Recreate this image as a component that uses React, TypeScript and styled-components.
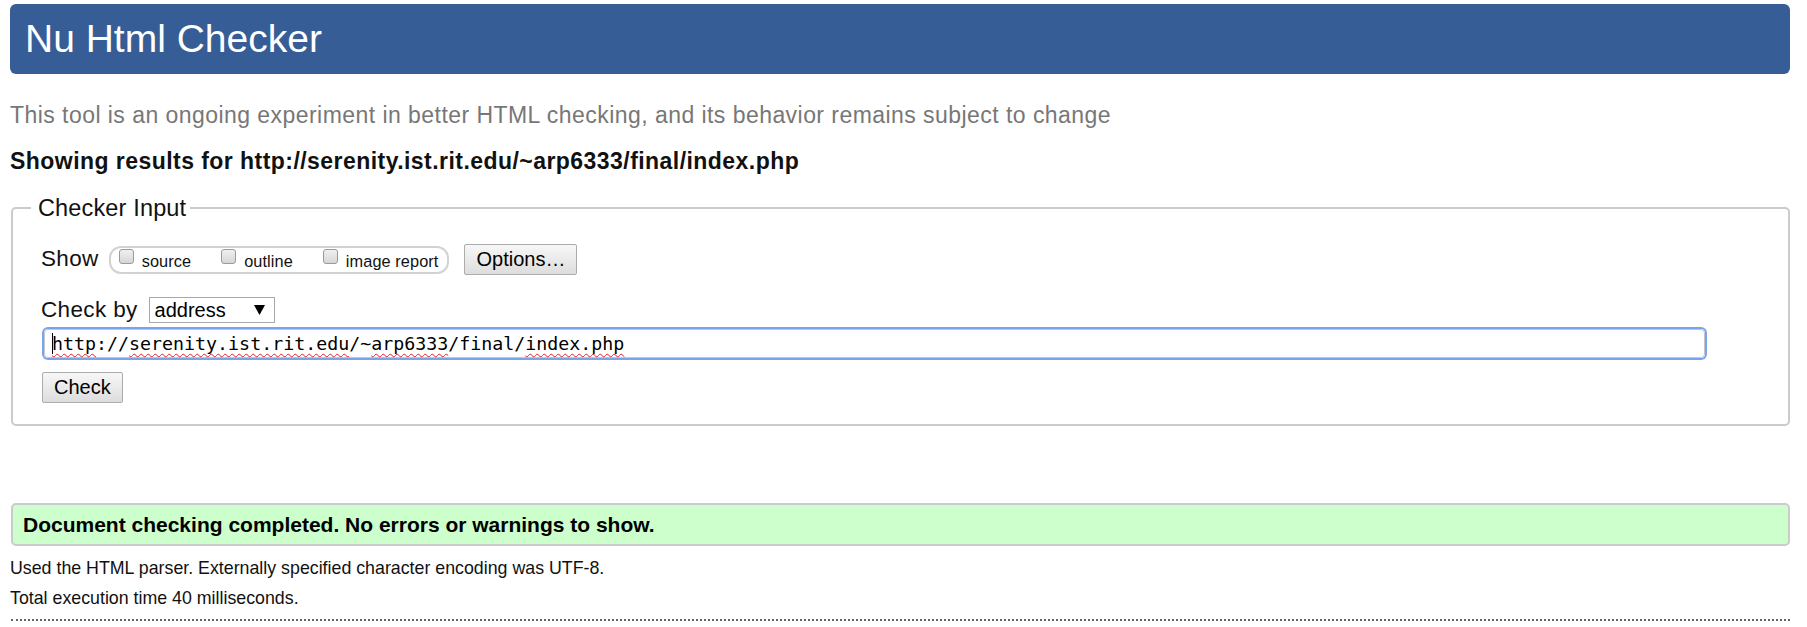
import React from "react";
import styled, { createGlobalStyle } from "styled-components";

const Global = createGlobalStyle`
  html, body { margin: 0; padding: 0; background: #fff; }
  body { font-family: "Liberation Sans", Arial, sans-serif; color: #111; }
`;

const Page = styled.div`
  padding: 4px 17px 0 10px;
`;

const Header = styled.header`
  height: 70px;
  background: #365d95;
  border-radius: 6px;
  display: flex;
  align-items: center;
  padding-left: 15px;
`;

const Title = styled.h1`
  margin: 0;
  font-size: 39px;
  font-weight: normal;
  color: #fff;
  line-height: 44px;
`;

const About = styled.p`
  margin: 28px 0 0 0;
  font-size: 23px;
  letter-spacing: 0.45px;
  line-height: 27px;
  color: #777;
`;

const Results = styled.h2`
  margin: 19px 0 0 0;
  font-size: 23px;
  letter-spacing: 0.45px;
  line-height: 27px;
  font-weight: bold;
  color: #111;
`;

const Fieldset = styled.fieldset`
  margin: 20px 0 0 1px;
  border: 2px solid #cbcbcb;
  border-radius: 5px;
  padding: 23px 0 21px 29px;
  min-width: 0;
`;

const Legend = styled.legend`
  margin-left: -11px;
  padding: 0 4px 0 7px;
  font-size: 23.5px;
  letter-spacing: 0.15px;
  line-height: 26px;
  color: #111;
`;

const Row = styled.div<{ $top?: number }>`
  display: flex;
  align-items: center;
  margin-top: ${(p) => p.$top ?? 0}px;
`;

const Label = styled.span<{ $lh: number }>`
  font-size: 22.5px;
  letter-spacing: 0.35px;
  line-height: ${(p) => p.$lh}px;
  align-self: flex-start;
  color: #111;
  margin-left: -1px;
`;

const Pill = styled.div`
  display: flex;
  align-items: flex-start;
  height: 24px;
  margin-left: 10px;
  padding: 0 9px 0 8px;
  border: 2px solid #d2d2d2;
  border-radius: 12px;
  gap: 30px;
`;

const CheckItem = styled.label`
  display: flex;
  align-items: flex-start;
  gap: 8px;
`;

const Box = styled.span`
  width: 15px;
  height: 15px;
  box-sizing: border-box;
  margin-top: 1px;
  border: 1px solid #9a9a9a;
  border-radius: 3px;
  background: linear-gradient(#f0f0f0, #d6d6d6);
`;

const CheckText = styled.span`
  font-size: 16.3px;
  letter-spacing: 0.1px;
  line-height: 24px;
  margin-top: 1px;
  color: #111;
`;

const Button = styled.button`
  height: 31px;
  padding: 0 11px;
  font-family: "Liberation Sans", Arial, sans-serif;
  font-size: 20px;
  color: #000;
  background: linear-gradient(#f7f7f7, #dddddd);
  border: 1px solid #acacac;
  border-radius: 2px;
  box-sizing: border-box;
`;

const OptionsButton = styled(Button)`
  margin-left: 15px;
  align-self: flex-start;
  padding: 0 11px;
`;

const Select = styled.div`
  margin-left: 11px;
  width: 126px;
  height: 26px;
  box-sizing: border-box;
  border: 1px solid #a9a9a9;
  background: #fff;
  display: flex;
  align-items: center;
  justify-content: space-between;
  padding: 0 9px 0 5px;
  font-size: 20px;
  line-height: 24px;
  color: #000;
`;

const Url = styled.div`
  margin-top: 6px;
  width: 1661px;
  height: 29px;
  box-sizing: border-box;
  border: 1px solid #c6c6c6;
  border-radius: 4px;
  box-shadow: 0 0 0 2px #78a4ee;
  margin-left: 2px;
  padding: 0 7px;
  display: flex;
  align-items: center;
  font-family: "DejaVu Sans Mono", "Liberation Mono", monospace;
  font-size: 18.3px;
  line-height: 27px;
  color: #000;
  white-space: pre;
`;

const Caret = styled.span`
  display: inline-block;
  width: 0;
  height: 21px;
  border-left: 1px solid #000;
  margin-right: -1px;
`;

const Misspelled = styled.span`
  text-decoration: underline wavy #e02020;
  text-decoration-thickness: 1px;
  text-underline-offset: 3px;
  text-decoration-skip-ink: none;
`;

const CheckButton = styled(Button)`
  display: block;
  margin-top: 14px;
`;

const Success = styled.div`
  margin: 77px 0 0 1px;
  height: 43px;
  box-sizing: border-box;
  border: 2px solid #cbcbcb;
  border-radius: 5px;
  background: #ccffcc;
  padding-left: 10px;
  font-size: 21px;
  font-weight: bold;
  line-height: 39px;
  color: #000;
`;

const Details = styled.div`
  margin-top: 7px;
  font-size: 17.8px;
  line-height: 30px;
  color: #111;
`;

const Rule = styled.hr`
  margin: 6px 0 0 1px;
  border: 0;
  border-top: 2px dotted #666;
  height: 0;
`;

function Arrow() {
  return (
    <svg width="11" height="10" viewBox="0 0 11 10" aria-hidden="true">
      <polygon points="0,0 11,0 5.5,10" fill="#000" />
    </svg>
  );
}

export default function App() {
  return (
    <>
      <Global />
      <Page>
        <Header>
          <Title>Nu Html Checker</Title>
        </Header>
        <About>
          This tool is an ongoing experiment in better HTML checking, and its behavior remains subject to change
        </About>
        <Results>Showing results for http://serenity.ist.rit.edu/~arp6333/final/index.php</Results>
        <Fieldset>
          <Legend>Checker Input</Legend>
          <Row>
            <Label $lh={29}>Show</Label>
            <Pill>
              <CheckItem>
                <Box />
                <CheckText>source</CheckText>
              </CheckItem>
              <CheckItem>
                <Box />
                <CheckText>outline</CheckText>
              </CheckItem>
              <CheckItem>
                <Box />
                <CheckText>image report</CheckText>
              </CheckItem>
            </Pill>
            <OptionsButton>Options…</OptionsButton>
          </Row>
          <Row $top={22}>
            <Label $lh={26}>Check by</Label>
            <Select>
              <span>address</span>
              <Arrow />
            </Select>
          </Row>
          <Url>
            <Caret />
            <Misspelled>http</Misspelled>://<Misspelled>serenity.ist.rit.edu</Misspelled>/~<Misspelled>arp6333</Misspelled>/final/<Misspelled>index.php</Misspelled>
          </Url>
          <CheckButton>Check</CheckButton>
        </Fieldset>
        <Success>Document checking completed. No errors or warnings to show.</Success>
        <Details>
          <div>Used the HTML parser. Externally specified character encoding was UTF-8.</div>
          <div>Total execution time 40 milliseconds.</div>
        </Details>
        <Rule />
      </Page>
    </>
  );
}
